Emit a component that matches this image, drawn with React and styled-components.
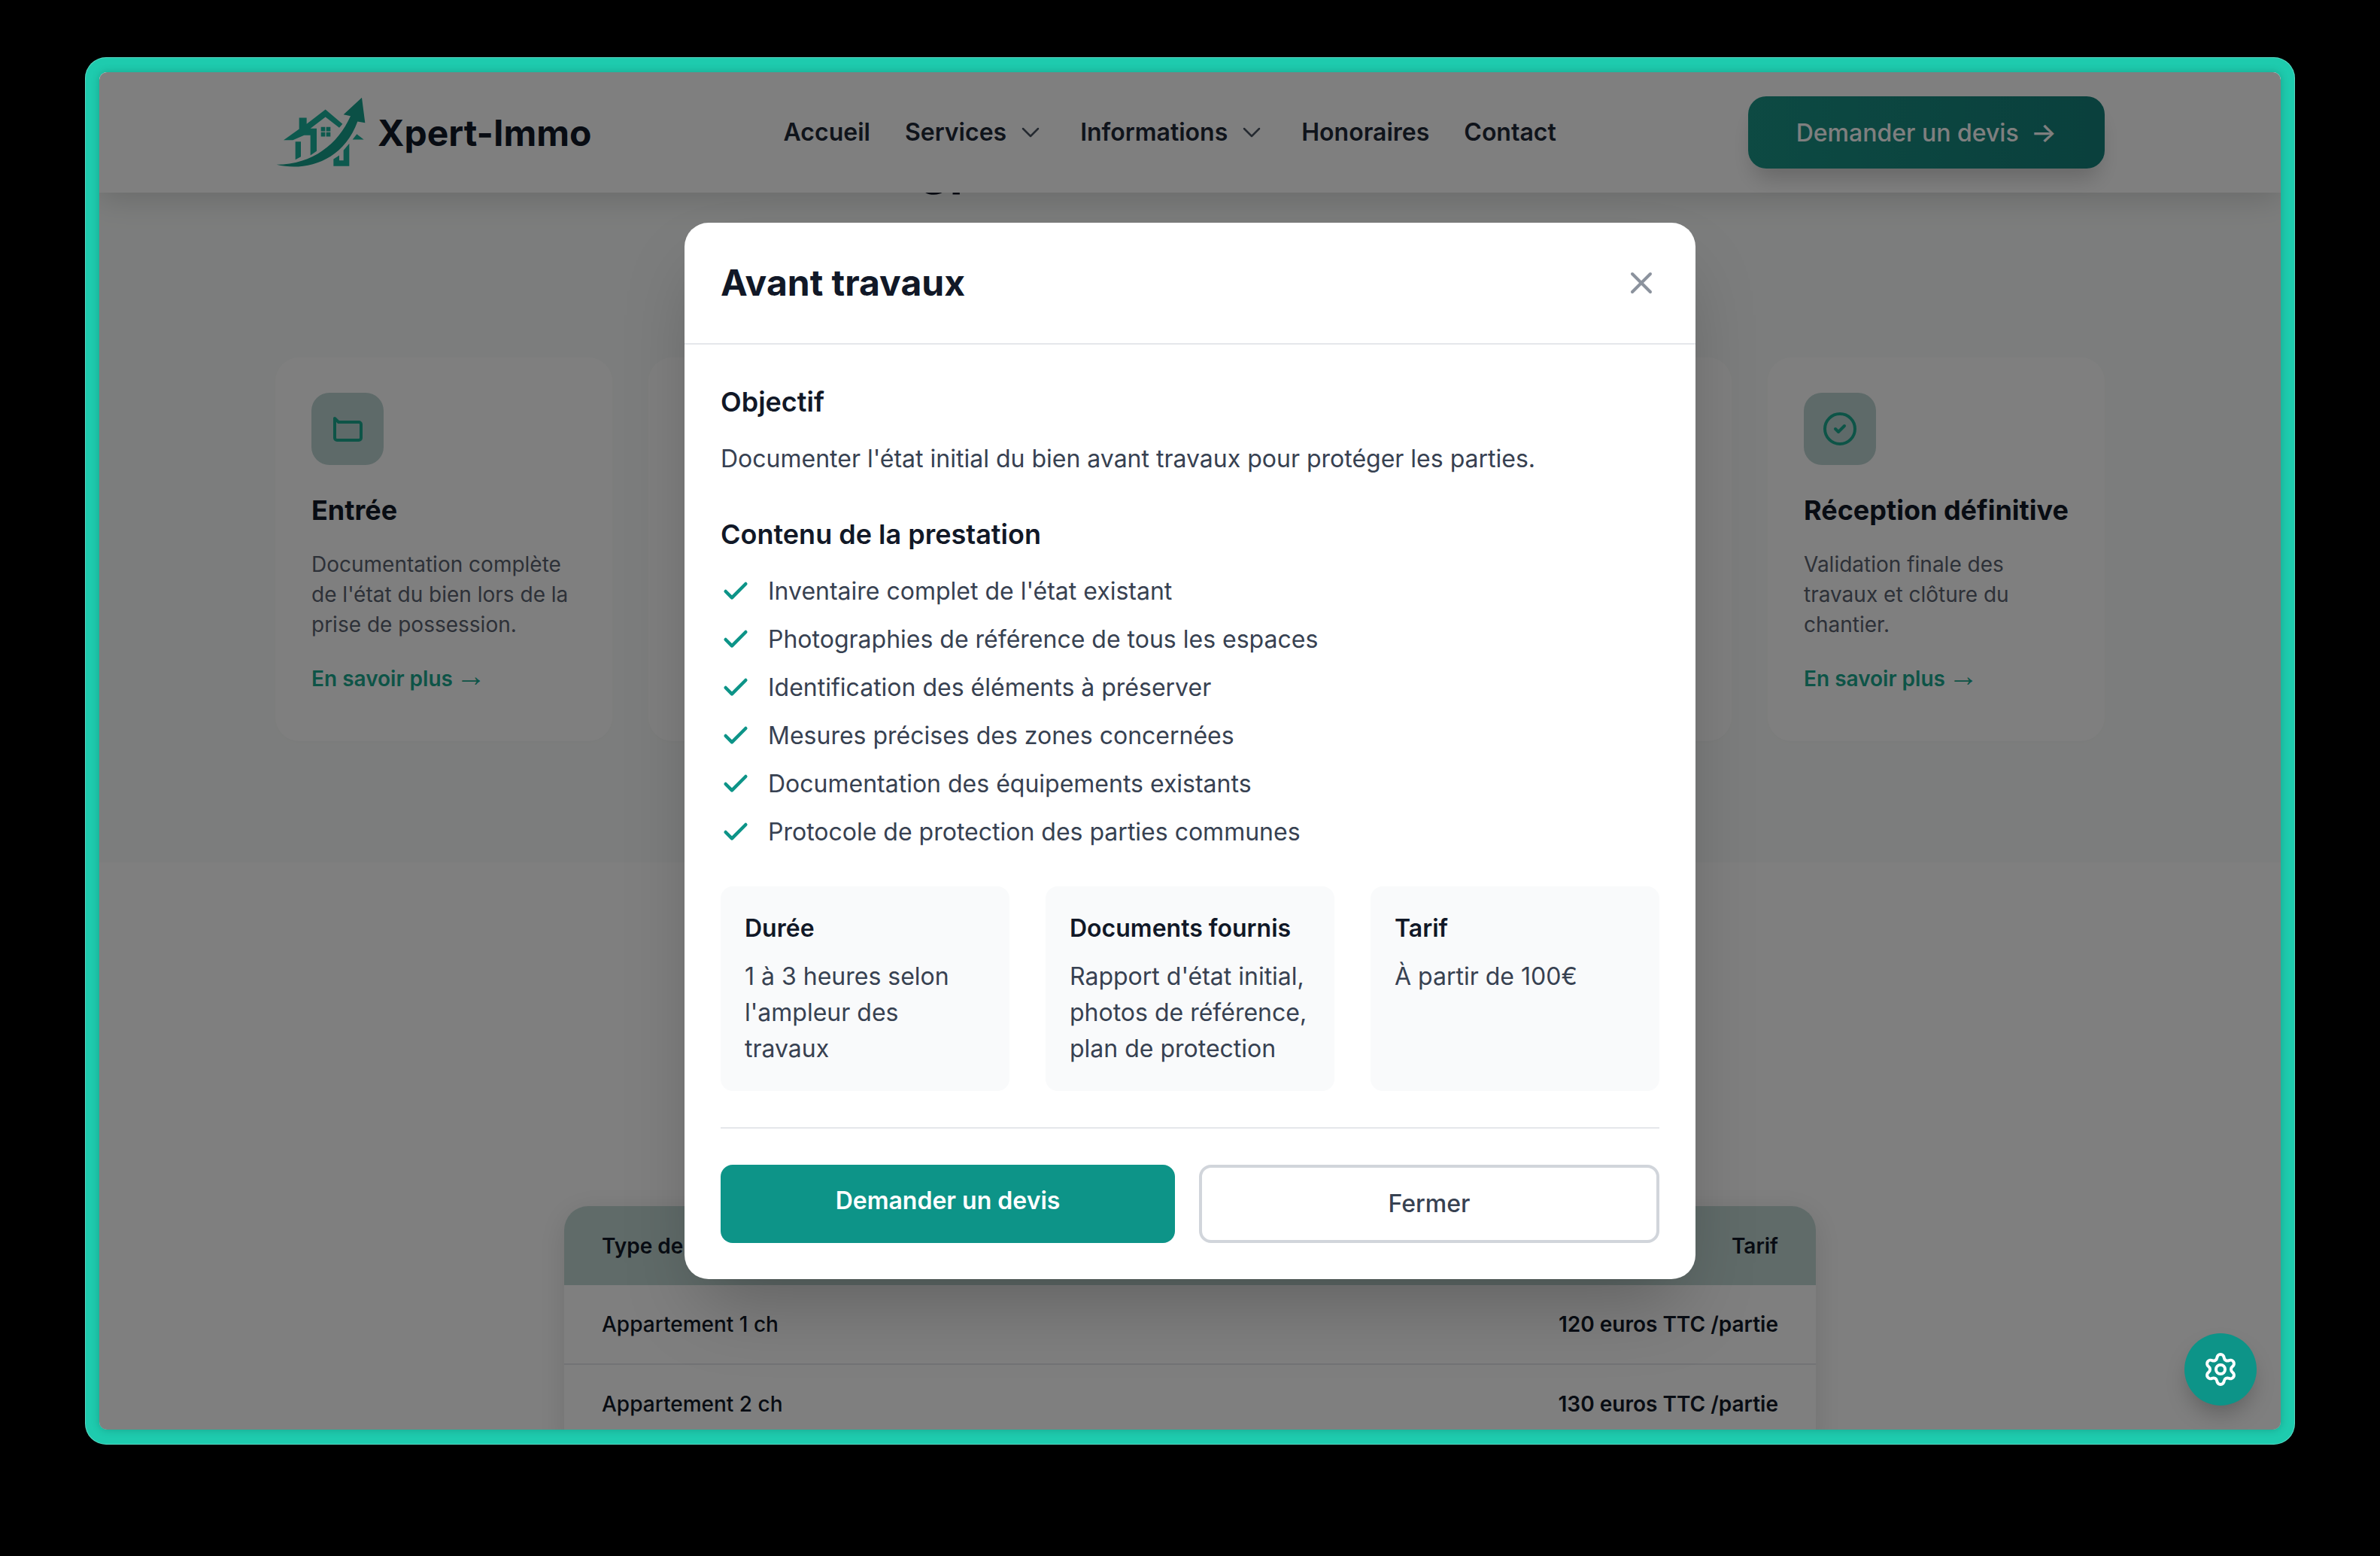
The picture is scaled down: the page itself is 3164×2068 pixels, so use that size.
import React from 'react';
import styled, { createGlobalStyle } from 'styled-components';
import { Check, ChevronDown, CircleCheck, Settings, X } from 'lucide-react';

const GlobalStyle = createGlobalStyle`
    * {
        box-sizing: border-box;
    }
    html, body {
        margin: 0;
        height: 100%;
        background: #000;
        overflow: hidden;
    }
    body {
        font-family: Inter, "Liberation Sans", sans-serif;
        color: #111827;
    }
`;

const Stage = styled.div`
    padding: 76px 113px;
    height: 2068px;
`;

const Frame = styled.div`
    height: 1844px;
    padding: 20px 19px;
    border-radius: 28px;
    background: #1ecbae;
    box-shadow: inset 0 0 0 1px rgba(255, 255, 255, 0.25);
`;

const Viewport = styled.div`
    position: relative;
    height: 1804px;
    overflow: hidden;
    border-radius: 10px;
    background: #fff;
    box-shadow: 0 0 12px rgba(0, 0, 0, 0.2);
`;

const Header = styled.header`
    position: relative;
    z-index: 2;
    height: 160px;
    background: #fff;
    box-shadow: 0 8px 40px rgba(0, 0, 0, 0.16);
`;

const HeaderInner = styled.div`
    width: 2432px;
    height: 100%;
    margin: 0 auto;
    display: flex;
    align-items: center;
    justify-content: space-between;
`;

const Brand = styled.div`
    display: flex;
    align-items: center;
    gap: 16px;
    font-size: 48px;
    font-weight: 700;
`;

const Nav = styled.nav`
    display: flex;
    align-items: center;
    gap: 46px;
`;

const NavItem = styled.a`
    display: flex;
    align-items: center;
    gap: 12px;
    font-size: 32px;
    line-height: 48px;
    font-weight: 600;
    color: #1f2937;
    svg {
        color: #4b5563;
    }
`;

const QuoteButton = styled.a`
    display: flex;
    align-items: center;
    gap: 16px;
    height: 96px;
    padding: 0 64px;
    border-radius: 24px;
    background: linear-gradient(90deg, #1a9486, #14807a);
    color: #fff;
    font-size: 32px;
    font-weight: 500;
    box-shadow: 0 20px 30px -8px rgba(0, 0, 0, 0.2);
`;

const QuoteArrow = styled.span`
    font-size: 36px;
`;

const StepsSection = styled.section`
    display: flow-root;
    height: 890px;
    background: #f9fbfa;
`;

// sits mostly behind the sticky header, only its descenders show
const SectionTitle = styled.h2`
    margin: -74px 0 213px;
    padding-left: 1090px;
    font-size: 64px;
    line-height: 80px;
    font-weight: 700;
    color: #111827;
`;

const CardGrid = styled.div`
    width: 2432px;
    margin: 0 auto;
    display: grid;
    grid-template-columns: repeat(5, 448px);
    gap: 48px;
`;

const Card = styled.article`
    height: 510px;
    padding: 47px 48px;
    border-radius: 32px;
    background: #fff;
    box-shadow: 0 2px 6px rgba(0, 0, 0, 0.015);
`;

const CardIcon = styled.div`
    width: 96px;
    height: 96px;
    border-radius: 24px;
    background: #bcd4d2;
    display: flex;
    align-items: center;
    justify-content: center;
    color: #1aa88f;
`;

const CardTitle = styled.h3`
    margin: 32px 0 24px;
    font-size: 36px;
    line-height: 56px;
    font-weight: 700;
    color: #111827;
`;

const CardText = styled.p`
    margin: 0;
    font-size: 28px;
    line-height: 40px;
    color: #5b6270;
`;

const CardLink = styled.a`
    display: block;
    margin-top: 32px;
    font-size: 28px;
    line-height: 40px;
    font-weight: 600;
    color: #1aa88f;
`;

const LinkArrow = styled.span`
    margin-left: -3px;
    font-family: "Liberation Sans", sans-serif;
    font-size: 40px;
    line-height: 0;
    font-weight: 400;
`;

const PriceSection = styled.section`
    padding-top: 457px;
`;

const PriceTable = styled.div`
    width: 1664px;
    margin: 0 auto;
    border-radius: 32px 32px 0 0;
    overflow: hidden;
    background: #fff;
    box-shadow: 0 8px 40px rgba(0, 0, 0, 0.12);
`;

const PriceRow = styled.div`
    display: flex;
    justify-content: space-between;
    align-items: center;
    height: ${props => props.$head ? '105px' : '106px'};
    padding: 0 50px;
    font-size: 28px;
    font-weight: ${props => props.$head ? 600 : 500};
    color: #111827;
    background: ${props => props.$head ? '#c0d6d3' : '#fff'};
    border-bottom: ${props => props.$head ? 'none' : '2px solid #e5e7eb'};
`;

const Price = styled.span`
    font-weight: 600;
`;

const Overlay = styled.div`
    position: absolute;
    inset: 0;
    z-index: 5;
    background: rgba(0, 0, 0, 0.5);
    display: flex;
    align-items: center;
    justify-content: center;
`;

const Modal = styled.div`
    width: 1344px;
    border-radius: 32px;
    background: #fff;
    box-shadow: 0 50px 100px -24px rgba(0, 0, 0, 0.25);
`;

const ModalHeader = styled.div`
    display: flex;
    align-items: center;
    justify-content: space-between;
    padding: 48px;
    border-bottom: 2px solid #e5e7eb;
`;

const ModalTitle = styled.h2`
    margin: 0;
    font-size: 48px;
    line-height: 64px;
    font-weight: 700;
    color: #111827;
`;

const CloseButton = styled.button`
    display: flex;
    padding: 0;
    border: 0;
    background: none;
    color: #8b929d;
`;

const ModalBody = styled.div`
    padding: 48px;
`;

const BodyHeading = styled.h3`
    margin: ${props => props.$first ? '0' : '48px'} 0 24px;
    font-size: 36px;
    line-height: 56px;
    font-weight: 600;
    color: #111827;
`;

const BodyText = styled.p`
    margin: 0;
    font-size: 32px;
    line-height: 48px;
    color: #374151;
`;

const FeatureList = styled.ul`
    margin: 0;
    padding: 0;
    list-style: none;
    display: flex;
    flex-direction: column;
    gap: 16px;
`;

const Feature = styled.li`
    display: flex;
    align-items: center;
    gap: 23px;
    font-size: 32px;
    line-height: 48px;
    color: #374151;
    svg {
        color: #0d9488;
        flex-shrink: 0;
    }
`;

const InfoGrid = styled.div`
    display: grid;
    grid-template-columns: repeat(3, 1fr);
    gap: 48px;
    margin-top: 48px;
`;

const InfoBox = styled.div`
    padding: 32px;
    border-radius: 16px;
    background: #f9fafb;
`;

const InfoTitle = styled.h4`
    margin: 0 0 16px;
    font-size: 32px;
    line-height: 48px;
    font-weight: 600;
    color: #111827;
`;

const InfoText = styled.p`
    margin: 0;
    font-size: 32px;
    line-height: 48px;
    color: #374151;
`;

const ModalActions = styled.div`
    display: flex;
    gap: 32px;
    margin-top: 48px;
    padding-top: 48px;
    border-top: 2px solid #e5e7eb;
`;

const PrimaryAction = styled.a`
    flex: 1;
    box-sizing: content-box;
    padding: 24px 0;
    border-radius: 16px;
    background: #0d9488;
    color: #fff;
    text-align: center;
    font-size: 32px;
    line-height: 48px;
    font-weight: 600;
`;

const SecondaryAction = styled.a`
    flex: 1;
    box-sizing: content-box;
    padding: 24px 0;
    border: 4px solid #d1d5db;
    border-radius: 16px;
    background: #fff;
    color: #374151;
    text-align: center;
    font-size: 32px;
    line-height: 48px;
    font-weight: 500;
`;

const SettingsButton = styled.button`
    position: absolute;
    right: 32px;
    bottom: 32px;
    z-index: 6;
    width: 96px;
    height: 96px;
    padding: 0;
    border: 0;
    border-radius: 50%;
    background: #0d9488;
    color: #fff;
    display: flex;
    align-items: center;
    justify-content: center;
    box-shadow: 0 16px 30px -6px rgba(0, 0, 0, 0.25);
`;

const LogoMark = () => (
    <svg width="120" height="97" viewBox="50 50 360 290" aria-hidden="true">
        <g fill="#1ab39c">
            <path d="M83 224 L145 180 V135 H175 V160 L250 102 L318 160 L305 175 L250 132 L190 178 H215 V268 L190 285 V205 H165 L120 224 Z" />
            <path d="M130 230 H152 V290 L130 302 Z" />
            <path d="M358 222 L375 200 L403 222 Z" />
            <path d="M322 265 L345 238 V328 H282 V300 L305 285 V305 H322 Z" />
            <path d="M232 172 h17 v17 h-17 Z M253 172 h17 v17 h-17 Z M232 193 h17 v17 h-17 Z M253 193 h17 v17 h-17 Z" />
        </g>
        <path fill="#17a08c" d="M55 322 C170 350 320 310 378 150 L408 155 L395 55 L322 122 L350 128 C300 240 200 320 55 322 Z" />
    </svg>
);

const FolderIcon = () => (
    <svg width="48" height="48" viewBox="0 0 48 48" fill="none" stroke="currentColor" strokeWidth="4" strokeLinejoin="round" aria-hidden="true">
        <path d="M7 10 V36 a3 3 0 0 0 3 3 H39 a3 3 0 0 0 3 -3 V18 a3 3 0 0 0 -3 -3 H12 L7 10 Z" />
    </svg>
);

const navLinks = [
    { label: 'Accueil' },
    { label: 'Services', menu: true },
    { label: 'Informations', menu: true },
    { label: 'Honoraires' },
    { label: 'Contact' },
];

const features = [
    "Inventaire complet de l'état existant",
    'Photographies de référence de tous les espaces',
    'Identification des éléments à préserver',
    'Mesures précises des zones concernées',
    'Documentation des équipements existants',
    'Protocole de protection des parties communes',
];

const infos = [
    { title: 'Durée', text: "1 à 3 heures selon l'ampleur des travaux" },
    { title: 'Documents fournis', text: "Rapport d'état initial, photos de référence, plan de protection" },
    { title: 'Tarif', text: 'À partir de 100€' },
];

export default function App() {
    return (
        <Stage>
            <GlobalStyle />
            <Frame>
                <Viewport>
                    <Header>
                        <HeaderInner>
                            <Brand>
                                <LogoMark />
                                Xpert-Immo
                            </Brand>
                            <Nav>
                                {navLinks.map(link => (
                                    <NavItem key={link.label}>
                                        {link.label}
                                        {link.menu && <ChevronDown size={40} strokeWidth={1.5} />}
                                    </NavItem>
                                ))}
                            </Nav>
                            <QuoteButton>Demander un devis <QuoteArrow>→</QuoteArrow></QuoteButton>
                        </HeaderInner>
                    </Header>

                    <StepsSection>
                        <SectionTitle>gp</SectionTitle>
                        <CardGrid>
                            <Card>
                                <CardIcon><FolderIcon /></CardIcon>
                                <CardTitle>Entrée</CardTitle>
                                <CardText>Documentation complète de l'état du bien lors de la prise de possession.</CardText>
                                <CardLink>En savoir plus <LinkArrow>→</LinkArrow></CardLink>
                            </Card>
                            <Card />
                            <Card />
                            <Card />
                            <Card>
                                <CardIcon><CircleCheck size={48} strokeWidth={2} /></CardIcon>
                                <CardTitle>Réception définitive</CardTitle>
                                <CardText>Validation finale des travaux et clôture du chantier.</CardText>
                                <CardLink>En savoir plus <LinkArrow>→</LinkArrow></CardLink>
                            </Card>
                        </CardGrid>
                    </StepsSection>

                    <PriceSection>
                        <PriceTable>
                            <PriceRow $head>
                                <span>Type de bien</span>
                                <span>Tarif</span>
                            </PriceRow>
                            <PriceRow>
                                <span>Appartement 1 ch</span>
                                <Price>120 euros TTC /partie</Price>
                            </PriceRow>
                            <PriceRow>
                                <span>Appartement 2 ch</span>
                                <Price>130 euros TTC /partie</Price>
                            </PriceRow>
                        </PriceTable>
                    </PriceSection>

                    <Overlay>
                        <Modal>
                            <ModalHeader>
                                <ModalTitle>Avant travaux</ModalTitle>
                                <CloseButton><X size={48} strokeWidth={2} /></CloseButton>
                            </ModalHeader>
                            <ModalBody>
                                <BodyHeading $first>Objectif</BodyHeading>
                                <BodyText>Documenter l'état initial du bien avant travaux pour protéger les parties.</BodyText>
                                <BodyHeading>Contenu de la prestation</BodyHeading>
                                <FeatureList>
                                    {features.map(item => (
                                        <Feature key={item}>
                                            <Check size={40} strokeWidth={2.7} />
                                            {item}
                                        </Feature>
                                    ))}
                                </FeatureList>
                                <InfoGrid>
                                    {infos.map(info => (
                                        <InfoBox key={info.title}>
                                            <InfoTitle>{info.title}</InfoTitle>
                                            <InfoText>{info.text}</InfoText>
                                        </InfoBox>
                                    ))}
                                </InfoGrid>
                                <ModalActions>
                                    <PrimaryAction>Demander un devis</PrimaryAction>
                                    <SecondaryAction>Fermer</SecondaryAction>
                                </ModalActions>
                            </ModalBody>
                        </Modal>
                    </Overlay>

                    <SettingsButton><Settings size={48} strokeWidth={2} /></SettingsButton>
                </Viewport>
            </Frame>
        </Stage>
    );
}
